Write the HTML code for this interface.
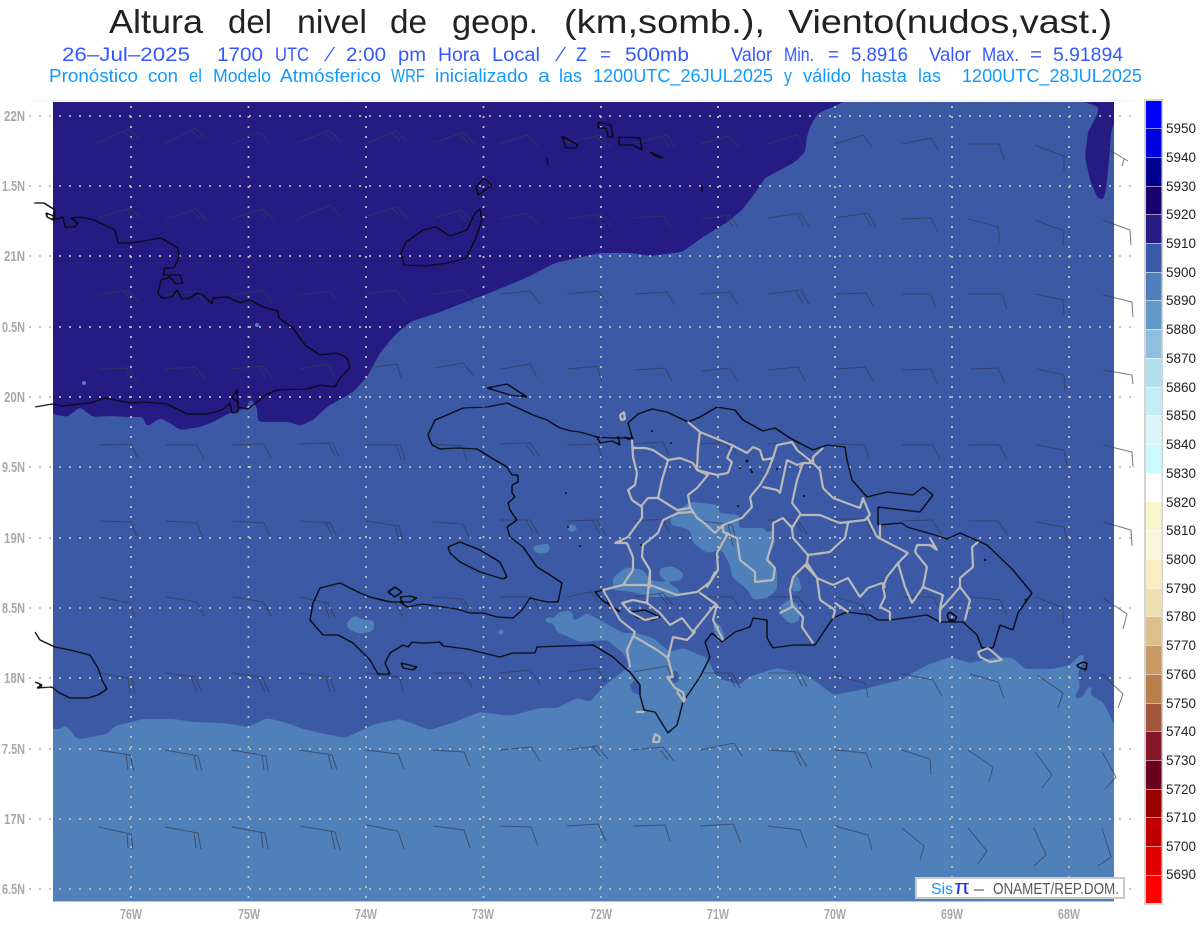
<!DOCTYPE html>
<html lang="es">
<head>
<meta charset="utf-8">
<title>Altura del nivel de geop.</title>
<style>
html,body{margin:0;padding:0;background:#fff}
svg{display:block;font-family:"Liberation Sans",sans-serif}
</style>
</head>
<body>
<svg width="1200" height="927" viewBox="0 0 1200 927" xmlns="http://www.w3.org/2000/svg">
<defs>
<clipPath id="plot"><rect x="53" y="102" width="1061" height="799"/></clipPath>
<filter id="s" x="-5%" y="-5%" width="110%" height="110%" color-interpolation-filters="sRGB">
<feGaussianBlur stdDeviation="2"/>
<feComponentTransfer><feFuncA type="linear" slope="12" intercept="-5.5"/></feComponentTransfer>
</filter>
<filter id="l" x="-2%" y="-2%" width="104%" height="104%" color-interpolation-filters="sRGB">
<feGaussianBlur stdDeviation="0.8"/>
<feComponentTransfer><feFuncA type="linear" slope="4" intercept="-1"/></feComponentTransfer>
</filter>
</defs>
<rect width="1200" height="927" fill="#fff"/>

<!-- Titles -->
<g font-size="33.5" fill="#222">
<text x="109" y="33" textLength="94" lengthAdjust="spacingAndGlyphs">Altura</text>
<text x="228" y="33" textLength="44" lengthAdjust="spacingAndGlyphs">del</text>
<text x="297" y="33" textLength="70" lengthAdjust="spacingAndGlyphs">nivel</text>
<text x="390" y="33" textLength="37" lengthAdjust="spacingAndGlyphs">de</text>
<text x="452" y="33" textLength="86" lengthAdjust="spacingAndGlyphs">geop.</text>
<text x="564" y="33" textLength="201" lengthAdjust="spacingAndGlyphs">(km,somb.),</text>
<text x="788" y="33" textLength="324" lengthAdjust="spacingAndGlyphs">Viento(nudos,vast.)</text>
</g>
<g font-size="19.500" fill="#3358ff">
<text x="62" y="61" textLength="128" lengthAdjust="spacingAndGlyphs">26–Jul–2025</text>
<text x="217" y="61" textLength="46" lengthAdjust="spacingAndGlyphs">1700</text>
<text x="275" y="61" textLength="34" lengthAdjust="spacingAndGlyphs">UTC</text>
<text transform="translate(324,61) skewX(-22)">/</text>
<text x="346" y="61" textLength="40" lengthAdjust="spacingAndGlyphs">2:00</text>
<text x="398" y="61" textLength="28" lengthAdjust="spacingAndGlyphs">pm</text>
<text x="438" y="61" textLength="42" lengthAdjust="spacingAndGlyphs">Hora</text>
<text x="492" y="61" textLength="48" lengthAdjust="spacingAndGlyphs">Local</text>
<text transform="translate(555,61) skewX(-22)">/</text>
<text x="576" y="61" textLength="11" lengthAdjust="spacingAndGlyphs">Z</text>
<text x="600" y="61" textLength="11" lengthAdjust="spacingAndGlyphs">=</text>
<text x="625" y="61" textLength="64" lengthAdjust="spacingAndGlyphs">500mb</text>
<text x="731" y="61" textLength="41" lengthAdjust="spacingAndGlyphs">Valor</text>
<text x="784" y="61" textLength="30" lengthAdjust="spacingAndGlyphs">Min.</text>
<text x="828" y="61" textLength="11" lengthAdjust="spacingAndGlyphs">=</text>
<text x="851" y="61" textLength="57" lengthAdjust="spacingAndGlyphs">5.8916</text>
<text x="929" y="61" textLength="42" lengthAdjust="spacingAndGlyphs">Valor</text>
<text x="982" y="61" textLength="37" lengthAdjust="spacingAndGlyphs">Max.</text>
<text x="1030" y="61" textLength="12" lengthAdjust="spacingAndGlyphs">=</text>
<text x="1053" y="61" textLength="70" lengthAdjust="spacingAndGlyphs">5.91894</text>
</g>
<g font-size="18" fill="#0f9aff">
<text x="49" y="82" textLength="89" lengthAdjust="spacingAndGlyphs">Pronóstico</text>
<text x="148" y="82" textLength="30" lengthAdjust="spacingAndGlyphs">con</text>
<text x="189" y="82" textLength="13" lengthAdjust="spacingAndGlyphs">el</text>
<text x="213" y="82" textLength="58" lengthAdjust="spacingAndGlyphs">Modelo</text>
<text x="280" y="82" textLength="101" lengthAdjust="spacingAndGlyphs">Atmósferico</text>
<text x="391" y="82" textLength="34" lengthAdjust="spacingAndGlyphs">WRF</text>
<text x="435" y="82" textLength="93" lengthAdjust="spacingAndGlyphs">inicializado</text>
<text x="538" y="82" textLength="12" lengthAdjust="spacingAndGlyphs">a</text>
<text x="559" y="82" textLength="23" lengthAdjust="spacingAndGlyphs">las</text>
<text x="593" y="82" textLength="180" lengthAdjust="spacingAndGlyphs">1200UTC_26JUL2025</text>
<text x="784" y="82" textLength="8" lengthAdjust="spacingAndGlyphs">y</text>
<text x="803" y="82" textLength="48" lengthAdjust="spacingAndGlyphs">válido</text>
<text x="861" y="82" textLength="46" lengthAdjust="spacingAndGlyphs">hasta</text>
<text x="918" y="82" textLength="23" lengthAdjust="spacingAndGlyphs">las</text>
<text x="962" y="82" textLength="180" lengthAdjust="spacingAndGlyphs">1200UTC_28JUL2025</text>
</g>

<!-- Plot background -->
<path d="M32 100.5H1135" stroke="#f0f0f4" stroke-width="1"/>
<rect x="53" y="102" width="1061" height="799" fill="#3c59a5"/>
<rect x="53" y="901" width="1061" height="1" fill="#a9c8e8"/>

<g clip-path="url(#plot)">
<!-- Light field -->
<g fill="#4f80ba" filter="url(#s)">
<path d="M40 728 53 728 58 730 66 725 77 739 87 738 107 734 115 726 143 719 173 719 193 722 223 723 248 727 267 718 287 723 300 728 320 733 345 738 375 724 400 719 430 730 455 722 480 712 510 716 540 708 557 708 577 698 590 702 603 687 622 672 630 665 623 653 607 640 580 642 557 632 553 622 557 613 572 610 573 622 587 613 600 620 623 633 637 633 653 638 670 652 683 648 707 658 717 678 740 685 748 677 777 668 800 673 817 682 833 695 860 690 900 680 927 665 950 657 970 663 997 657 1013 658 1025 669 1053 669 1070 665 1082 653 1085 658 1078 673 1080 687 1073 700 1083 697 1088 687 1093 685 1090 695 1103 702 1112 720 1120 740V910H40Z"/>
<path d="M672 515 690 502 703 503 718 505 719 513 740 515 738 528 765 528 767 535 773 527 775 543 768 557 777 570 777 590 767 598 753 600 748 590 732 577 730 565 722 550 707 553 693 543 690 530 680 527 670 525Z"/>
<path d="M613 577 627 567 643 570 650 580 668 583 680 590 678 597 650 597 632 592 613 590Z"/>
<path d="M660 568 672 566 684 573 681 581 668 581 659 576Z"/>
<path d="M780 606 790 599 798 605 800 621 790 624 780 614Z"/>
<path d="M792 577 798 575 802 591 792 592Z"/>
<path d="M712 622 720 624 726 641 717 642Z"/>
<path d="M346 623 355 615 363 620 374 620 374 631 360 634 348 629Z"/>
<path d="M530 547 549 543 550 552 538 554Z"/>
<path d="M566 528 572 523 579 529 571 533Z"/>
<ellipse cx="549" cy="620" rx="4" ry="3.500"/><ellipse cx="501" cy="632" rx="4" ry="3"/>
<path d="M45 372 56 380 57 394 45 400Z"/>
<path d="M78 385 84 378 90 386 84 388Z"/>
</g>
<g fill="#3c59a5">
<path d="M630 685 635 680 640 685 640 695 633 693Z"/>
<ellipse cx="675" cy="677" rx="4" ry="6"/>
</g>

<!-- Dark field -->
<g fill="#261b83" filter="url(#s)">
<path d="M40 92H864L833 107 818 113 810 127 807 137 805 152 795 162 765 178 755 193 742 210 726 223 703 237 682 252 650 256 631 253 600 253 555 263 528 277 497 290 471 300 440 312 410 322 395 335 380 353 367 377 353 392 327 407 313 420 300 426 290 422 258 422 257 408 250 397 247 408 230 413 213 422 200 427 180 430 170 423 160 418 147 427 143 417 130 417 110 416 93 417 80 407 67 417 53 414 40 414Z"/>
<path d="M1084 92 1084 102 1099 107 1097 115 1088 132 1085 157 1090 180 1097 197 1103 201 1106 190 1109 160 1111 133 1114 122 1125 122V92Z"/>
</g>
<g fill="#4f80ba"><circle cx="257" cy="325" r="2"/><circle cx="84" cy="383" r="2"/></g>
</g>

<!-- Grid -->
<g fill="none" stroke="#c0c0b0" stroke-width="1.800" stroke-dasharray="2 8">
<path d="M29 116H1135M29 186H1135M29 256H1135M29 327H1135M29 397H1135M29 467H1135M29 538H1135M29 608H1135M29 678H1135M29 749H1135M29 819H1135M29 889H1135"/>
<path d="M131 106V905M248.5 106V905M366 106V905M483.5 106V905M601 106V905M718 106V905M835 106V905M952 106V905M1069 106V905"/>
</g>

<!-- Wind barbs -->
<path fill="none" stroke="#333a55" stroke-opacity=".7" stroke-width="1" d="
M98 143L128 129 140 139M124 131 132 139M165 143L195 128 207 139M191 130 199 138M232 144L259 132 270 143M298 143L329 130 341 142M325 132 333 141M365 144L396 131 407 142M392 133 400 141M434 143L464 132 474 144M460 134 468 143M500 144L527 135 538 147M566 143L600 135 611 148M596 136 605 146M634 143L667 135 675 148M662 137 669 147M701 144L729 136 739 148M768 144L797 135 805 148M835 144L863 135 872 147M902 144L931 138 939 151M968 144L999 144 1004 159M1035 145L1064 156 1064 171M1103 146L1128 161M1124 159 1122 166
M98 218L130 208 140 218M126 209 134 218M165 219L196 209 207 221M192 210 200 220M232 219L262 209 274 220M258 210 266 219M298 219L330 205 341 217M365 217L396 207 408 218M392 208 400 217M434 218L461 210 473 222M457 211 465 221M500 219L526 213 538 224M567 219L600 214 612 227M596 215 604 226M634 218L663 216 671 229M701 219L730 215 738 228M726 216 733 227M768 218L801 213 809 227M797 214 804 226M835 218L868 213 876 227M864 214 871 226M902 219L931 218 938 232M968 219L998 227 1000 242M1035 220L1064 231 1063 246M1103 220L1130 230 1131 245
M98 295L128 290 139 303M124 291 132 302M165 295L195 291 206 304M232 295L263 290 272 303M298 295L330 291 336 299M365 294L396 290 406 303M434 294L463 290 473 303M500 294L530 291 540 304M567 294L598 291 608 304M634 294L667 292 675 305M701 294L730 292 738 305M768 294L801 290 809 304M796 291 803 303M835 294L866 293 873 306M902 294L930 294 936 308M968 294L1002 294 1007 309M1036 294L1063 300 1064 315M1103 295L1132 302 1133 317
M98 369L130 368 137 383M126 368 132 382M165 369L195 367 205 379M191 368 199 378M232 369L263 366 273 379M259 367 266 378M300 369L328 364 336 378M367 368L397 364 401 378M434 368L463 363 473 375M501 369L530 364 537 377M568 369L597 366 602 382M635 370L665 368 672 381M702 371L730 368 738 381M768 370L798 367 805 381M835 369L865 367 873 381M902 370L931 369 937 383M970 369L998 368 1005 383M1037 369L1064 375 1065 390M1103 370L1132 375 1133 384
M99 445L131 444 138 458M166 445L197 445 204 459M233 445L264 444 271 458M299 444L333 443 339 457M329 444 335 456M366 445L400 445 405 460M396 445 401 459M433 444L462 446 467 461M500 444L530 443 540 457M526 444 534 456M567 445L597 444 602 458M633 444L663 442 669 455M701 444L730 442 737 455M726 443 732 454M768 444L797 442 803 458M835 444L865 445 869 459M902 445L933 445 940 459M969 445L999 445 1007 459M1036 445L1064 450 1067 465M1103 445L1132 452 1133 467
M99 521L131 522 137 537M166 521L197 523 203 538M233 521L264 523 270 537M299 521L330 523 337 537M326 523 332 535M366 521L399 526 403 542M395 525 399 541M433 522L463 524 470 539M500 520L530 520 539 535M526 520 533 532M567 521L597 520 606 536M592 520 600 534M634 521L663 519 669 533M702 521L732 525 738 547M728 524 733 546M768 520L798 520 807 534M794 520 802 532M834 519L865 519 873 533M903 521L932 520 941 534M969 521L998 521 1008 535M1036 522L1064 527 1067 542M1103 522L1131 530 1132 546
M99 597L130 603 135 618M166 597L197 602 204 616M233 597L263 602 271 616M299 597L328 603 335 618M324 602 329 617M366 597L395 602 403 617M433 597L463 599 472 612M459 598 467 611M500 597L532 597 540 610M567 597L595 591 605 603M591 592 599 603M633 597L663 593 673 605M659 594 668 605M702 597L732 597 739 606M768 597L798 597 807 608M835 597L863 605 869 620M903 597L933 597 939 607M970 597L1000 600 1007 615M1036 597L1063 608 1063 623M1103 598L1127 614 1123 629
M100 673L132 679 135 694M128 679 130 693M165 673L195 677 202 692M191 677 197 692M232 673L262 677 269 692M258 677 265 692M299 673L330 677 335 692M326 677 330 692M366 673L399 677 403 691M433 673L463 673 472 687M500 673L530 670 540 684M567 672L597 668 605 682M633 672L667 666 672 677M703 673L732 673 740 688M728 673 735 687M768 673L800 673 807 687M796 673 802 686M835 675L865 683 868 697M902 674L933 680 942 696M970 674L998 682 1004 698M1037 675L1063 693 1058 708M1102 674L1123 694 1118 708
M98 750L130 755 134 771M126 754 128 770M165 750L198 756 202 771M194 755 197 770M232 750L266 756 268 771M262 755 264 770M299 750L332 755 337 770M328 754 332 769M366 750L398 754 404 769M433 750L464 752 470 767M500 750L531 747 540 761M567 750L597 746 608 759M593 747 602 758M633 750L663 747 674 761M659 748 668 760M700 750L734 743 742 756M768 750L798 752 807 767M794 751 801 766M835 750L866 753 872 768M902 750L930 759 931 775M968 750L993 767 989 782M1035 752L1052 775 1042 788M1102 752L1116 777 1105 789
M98 827L131 834 133 849M127 833 128 848M165 827L198 833 201 849M194 832 196 848M232 827L265 833 268 849M261 832 263 848M300 826L335 832 340 850M331 831 335 849M366 825L398 831 404 849M433 826L464 830 470 848M500 826L531 827 538 846M567 826L598 824 606 841M633 826L665 825 670 841M700 826L733 824 741 843M768 826L800 830 807 848M835 826L868 835 872 850M902 828L924 846 920 860M968 828L987 851 978 864M1034 828L1046 855 1034 866M1102 828L1111 857 1098 866"/>

<!-- Coastlines -->
<g fill="none" stroke="#0a0a14" stroke-width="1.100" stroke-linejoin="round" stroke-linecap="round" filter="url(#l)">
<path d="M633 438 613 438 597 437 580 432 571 431 560 428 547 420 533 415 507 403 487 407 463 408 447 415 435 420 428 435 432 445 440 449 458 448 477 449 490 457 507 467 512 475 518 475 518 482 512 485 512 493 515 497 508 503 510 510 517 520 507 527 510 537 523 547 537 567 547 573 562 583 558 602 547 602 530 598 522 610 513 618 497 617 483 613 470 613 457 609 443 607 423 604 407 607 400 602 390 602 370 597 360 593 340 583 320 588 313 603 310 620 323 635 338 635 353 643 370 660 378 674 390 674 385 663 390 653 403 645 408 647 412 642 420 643 428 643 440 642 443 646 467 649 500 657 513 653 535 653 537 647 563 646 593 645 613 657 627 670 630 672 640 685 640 695 644 710 655 712 663 725 668 733 677 725 683 702 700 677 710 657 705 642 712 633 722 642 735 632 750 627 753 618 767 620 767 638 773 648 793 645 815 645 833 618 847 612 870 615 878 620 890 620 927 615 940 622 963 622 977 635 982 648 993 648 1000 625 1013 630 1018 613 1032 593 1013 570 987 545 960 533 947 539 935 535 907 527 902 523 878 525 878 507 920 512 933 495 923 487 913 495 887 492 867 497 852 480 847 460 845 447 827 445 813 450 790 438 775 428 763 431 743 420 735 410 717 407 700 417 688 422 667 412 652 409 638 414 628 423 633 440"/>
<path d="M448 547 460 542 480 550 500 562 507 577 503 579 480 572 460 562 450 553Z"/>
<path d="M487 388 507 384 527 397 510 395Z"/>
<path d="M388 592 395 587 402 592 395 597Z"/>
<path d="M400 597 410 596 417 598 410 602 402 602Z"/>
<path d="M401 663 417 667 413 670 403 668Z"/>
<path d="M947 615 950 612 957 617 955 620 949 620Z"/>
<path d="M978 652 988 648 1002 660 990 662 980 657Z"/>
<path d="M1077 665 1083 662 1087 663 1086 670 1078 667Z"/>
<path d="M597 437 600 443 612 441 620 445 618 436M625 437 630 440"/>
<path d="M603 590 610 605 620 612 602 600 595 592Z"/>
<path d="M630 612 645 610 660 617 652 620 638 618Z"/>
<path d="M34 203 44 203 55 210 54 220 63 217 65 227 75 227 78 223 71 218 80 217 94 220 115 230 118 243 132 243 161 238 178 248 179 257 174 268 165 268 163 275 180 275 183 283 176 284 170 277 161 280 158 293 162 298 172 297 177 290 182 299 190 298 197 293 203 295 212 304 213 298 227 297 240 303 250 300 263 307 278 311 279 318 293 328 305 345 320 355 337 353 347 358 350 368 340 378 335 387 320 385 307 389 277 390 265 395 257 402 248 409 238 407 237 389 232 398 238 402 238 412 232 413 230 403 222 410 207 414 187 414 167 404 143 402 130 403 105 398 90 403 63 406 52 404 35 407"/>
<path d="M46 213 54 216 53 220 47 217Z"/>
<path d="M480 209 482 220 475 240 466 258 448 263 425 266 404 265 401 253 406 242 423 230 436 227 450 236 467 230 475 213Z"/>
<path d="M484 178 492 185 478 195 476 187Z"/>
<path d="M562 136 578 145 576 148 566 148Z"/>
<path d="M547 158 548 165"/>
<path d="M598 122 611 125 613 137 608 137 606 128 598 128Z"/>
<path d="M619 137 640 138 642 150 633 145 619 145Z"/>
<path d="M650 152 663 158 657 157Z"/>
<path d="M702 185 702 192"/>
<path d="M35 632 40 640 55 647 70 650 90 655 98 668 102 680 107 689 98 695 88 698 70 698 58 692 52 687 37 688 42 685 35 682"/>
</g>
<g fill="#111">
<circle cx="652" cy="431" r="1"/><circle cx="671" cy="443" r="1"/><circle cx="747" cy="461" r="1.500"/><circle cx="740" cy="468" r="1"/><circle cx="751" cy="470" r="1"/><circle cx="752" cy="472" r="1.200"/><circle cx="777" cy="469" r="1"/><circle cx="804" cy="496" r="1"/><circle cx="738" cy="506" r="1"/><circle cx="641" cy="545" r="1"/><circle cx="985" cy="560" r="1.200"/><circle cx="1026" cy="600" r="1.500"/><circle cx="566" cy="493" r="1"/><circle cx="580" cy="546" r="1"/><circle cx="568" cy="527" r="1"/>
</g>

<!-- Provincial borders -->
<g fill="none" stroke="#b8b8b8" stroke-width="1.700" stroke-linejoin="round" stroke-linecap="round" filter="url(#l)">
<path d="M632 440 633 457 637 473 635 485 628 490 632 500 642 507 642 518 635 527 628 537 615 543 627 543 633 557 633 570 623 585 603 590 607 597 620 620 635 632 627 650 630 667"/>
<path d="M623 585 650 585 677 595 697 592 710 582 715 572"/>
<path d="M635 637 657 650 668 658 673 677 667 677 675 688 683 692 685 700"/>
<path d="M668 658 673 637 687 640 695 632"/>
<path d="M650 570 647 603 660 613 670 625 682 618 693 632 713 607 717 605 700 593"/>
<path d="M713 620 723 640M717 605 713 620"/>
<path d="M622 603 633 600 647 603M622 603 630 612 645 620 658 617"/>
<path d="M632 448 645 448 653 450 668 460 680 458 693 463 697 470 708 475 697 488 688 495 690 507 697 518 703 522 715 533 723 525 742 518 752 507 750 497 760 485 767 473 773 458 777 445 792 442"/>
<path d="M668 460 662 480 658 498 677 510 690 508"/>
<path d="M688 422 700 432 698 448 697 470"/>
<path d="M700 432 732 445 747 453 753 447 760 450 763 460 773 458"/>
<path d="M697 470 717 475 728 473 732 462 727 458 732 447"/>
<path d="M658 498 648 498 642 505"/>
<path d="M678 513 663 520 658 533 643 545 642 557 650 570 650 587"/>
<path d="M678 513 692 512"/>
<path d="M723 525 723 532 737 538 740 560 755 572 755 582 773 580 775 568 767 560 773 540 773 523 783 518 792 528 800 515 820 515 832 520 840 523 848 522 865 520 870 515 863 498"/>
<path d="M728 533 717 553 718 570 707 587"/>
<path d="M792 528 793 538 808 555 807 563 817 578"/>
<path d="M808 555 830 552 835 547 845 538 848 523"/>
<path d="M807 563 793 577 790 590 792 605 803 617 802 627 813 643"/>
<path d="M777 490 763 487M777 490 780 493 787 460 797 465 803 463 813 463 820 470 823 488 833 498 860 508 863 498"/>
<path d="M803 463 797 480 792 503 800 513"/>
<path d="M813 463 813 457 823 448"/>
<path d="M792 442 797 450 812 462"/>
<path d="M867 517 877 537 908 553 898 563 887 577 883 587 885 597 880 607 890 612 890 620"/>
<path d="M898 563 905 587 912 603 923 587 927 567 915 552 917 545 930 545 937 550 930 538"/>
<path d="M923 587 943 595 940 608 940 622"/>
<path d="M940 610 960 587 970 600 965 620"/>
<path d="M960 587 960 578 973 567 972 547 978 542"/>
<path d="M805 565 817 578 833 585 848 578 860 597 868 588 882 583 885 587"/>
<path d="M817 578 820 600 835 610 833 618"/>
<path d="M835 603 848 612"/>
<path d="M880 525 880 537"/>
<path d="M780 613 792 607"/>
<path d="M978 652 988 648 1002 660 990 662 980 657Z"/>
<path d="M653 742 655 734 660 737 659 742Z"/>
<path d="M636 712 644 712"/>
<path d="M620 415 624 412 625 419 621 420Z"/>
<path d="M677 692 684 702"/>
</g>

<!-- Axis labels -->
<g font-size="15" font-weight="bold" fill="#a8a8a8">
<text x="4" y="121" textLength="21" lengthAdjust="spacingAndGlyphs">22N</text>
<text x="2" y="191" textLength="23" lengthAdjust="spacingAndGlyphs">1.5N</text>
<text x="4" y="261" textLength="21" lengthAdjust="spacingAndGlyphs">21N</text>
<text x="2" y="332" textLength="23" lengthAdjust="spacingAndGlyphs">0.5N</text>
<text x="4" y="402" textLength="21" lengthAdjust="spacingAndGlyphs">20N</text>
<text x="2" y="472" textLength="23" lengthAdjust="spacingAndGlyphs">9.5N</text>
<text x="4" y="543" textLength="21" lengthAdjust="spacingAndGlyphs">19N</text>
<text x="2" y="613" textLength="23" lengthAdjust="spacingAndGlyphs">8.5N</text>
<text x="4" y="683" textLength="21" lengthAdjust="spacingAndGlyphs">18N</text>
<text x="2" y="754" textLength="23" lengthAdjust="spacingAndGlyphs">7.5N</text>
<text x="4" y="824" textLength="21" lengthAdjust="spacingAndGlyphs">17N</text>
<text x="2" y="894" textLength="23" lengthAdjust="spacingAndGlyphs">6.5N</text>
<text x="120" y="919" textLength="22" lengthAdjust="spacingAndGlyphs">76W</text>
<text x="238" y="919" textLength="22" lengthAdjust="spacingAndGlyphs">75W</text>
<text x="355" y="919" textLength="22" lengthAdjust="spacingAndGlyphs">74W</text>
<text x="472" y="919" textLength="22" lengthAdjust="spacingAndGlyphs">73W</text>
<text x="590" y="919" textLength="22" lengthAdjust="spacingAndGlyphs">72W</text>
<text x="707" y="919" textLength="22" lengthAdjust="spacingAndGlyphs">71W</text>
<text x="824" y="919" textLength="22" lengthAdjust="spacingAndGlyphs">70W</text>
<text x="941" y="919" textLength="22" lengthAdjust="spacingAndGlyphs">69W</text>
<text x="1058" y="919" textLength="22" lengthAdjust="spacingAndGlyphs">68W</text>
</g>

<!-- Legend box -->
<rect x="916" y="878" width="208" height="20" fill="#fff" stroke="#c9c9c9" stroke-width="2"/>
<text x="931" y="894" font-size="15.500" fill="#1295ff" textLength="22" lengthAdjust="spacingAndGlyphs">Sis</text>
<text x="954" y="894" font-size="20" fill="#2233ee" textLength="16" lengthAdjust="spacingAndGlyphs">π</text>
<text x="974" y="894" font-size="15" fill="#444" textLength="10" lengthAdjust="spacingAndGlyphs">–</text>
<text x="993" y="894" font-size="15.500" fill="#555" textLength="126" lengthAdjust="spacingAndGlyphs">ONAMET/REP.DOM.</text>

<!-- Colour bar -->
<rect x="1144" y="99" width="19" height="806" fill="#d3d3d3"/>
<g>
<rect x="1146" y="101" width="15.500" height="27" fill="#0000ff"/>
<rect x="1146" y="128" width="15.500" height="29" fill="#0000de"/>
<rect x="1146" y="157" width="15.500" height="29" fill="#00008f"/>
<rect x="1146" y="186" width="15.500" height="28" fill="#1a006e"/>
<rect x="1146" y="214" width="15.500" height="29" fill="#261b83"/>
<rect x="1146" y="243" width="15.500" height="29" fill="#3c59a5"/>
<rect x="1146" y="272" width="15.500" height="28" fill="#4f80ba"/>
<rect x="1146" y="300" width="15.500" height="29" fill="#6399c9"/>
<rect x="1146" y="329" width="15.500" height="29" fill="#8fbfdf"/>
<rect x="1146" y="358" width="15.500" height="29" fill="#b3dfee"/>
<rect x="1146" y="387" width="15.500" height="28" fill="#c4ecf5"/>
<rect x="1146" y="415" width="15.500" height="29" fill="#dcf4fa"/>
<rect x="1146" y="444" width="15.500" height="29" fill="#ccf9fd"/>
<rect x="1146" y="473" width="15.500" height="29" fill="#ffffff"/>
<rect x="1146" y="502" width="15.500" height="28" fill="#f9f4cc"/>
<rect x="1146" y="530" width="15.500" height="29" fill="#faf5dc"/>
<rect x="1146" y="559" width="15.500" height="29" fill="#f7eec2"/>
<rect x="1146" y="588" width="15.500" height="28" fill="#efe0b4"/>
<rect x="1146" y="616" width="15.500" height="29" fill="#dcc08c"/>
<rect x="1146" y="645" width="15.500" height="29" fill="#c69a62"/>
<rect x="1146" y="674" width="15.500" height="29" fill="#b87f4c"/>
<rect x="1146" y="703" width="15.500" height="28" fill="#a0573c"/>
<rect x="1146" y="731" width="15.500" height="29" fill="#851828"/>
<rect x="1146" y="760" width="15.500" height="29" fill="#6a001c"/>
<rect x="1146" y="789" width="15.500" height="28" fill="#960000"/>
<rect x="1146" y="817" width="15.500" height="29" fill="#c00000"/>
<rect x="1146" y="846" width="15.500" height="29" fill="#e00000"/>
<rect x="1146" y="875" width="15.500" height="28" fill="#ff0000"/>
</g>
<path stroke="#fff" stroke-opacity=".55" stroke-width="1" d="M1146 128.500h16M1146 157.500h16M1146 186.500h16M1146 214.500h16M1146 243.500h16M1146 272.500h16M1146 300.500h16M1146 329.500h16M1146 358.500h16M1146 387.500h16M1146 415.500h16M1146 444.500h16M1146 530.500h16M1146 559.500h16M1146 588.500h16M1146 616.500h16M1146 645.500h16M1146 674.500h16M1146 703.500h16M1146 731.500h16M1146 760.500h16M1146 789.500h16M1146 817.500h16M1146 846.500h16M1146 875.500h16"/>
<g font-size="14" fill="#222">
<text x="1166" y="133" textLength="30" lengthAdjust="spacingAndGlyphs">5950</text>
<text x="1166" y="162" textLength="30" lengthAdjust="spacingAndGlyphs">5940</text>
<text x="1166" y="191" textLength="30" lengthAdjust="spacingAndGlyphs">5930</text>
<text x="1166" y="219" textLength="30" lengthAdjust="spacingAndGlyphs">5920</text>
<text x="1166" y="248" textLength="30" lengthAdjust="spacingAndGlyphs">5910</text>
<text x="1166" y="277" textLength="30" lengthAdjust="spacingAndGlyphs">5900</text>
<text x="1166" y="305" textLength="30" lengthAdjust="spacingAndGlyphs">5890</text>
<text x="1166" y="334" textLength="30" lengthAdjust="spacingAndGlyphs">5880</text>
<text x="1166" y="363" textLength="30" lengthAdjust="spacingAndGlyphs">5870</text>
<text x="1166" y="392" textLength="30" lengthAdjust="spacingAndGlyphs">5860</text>
<text x="1166" y="420" textLength="30" lengthAdjust="spacingAndGlyphs">5850</text>
<text x="1166" y="449" textLength="30" lengthAdjust="spacingAndGlyphs">5840</text>
<text x="1166" y="478" textLength="30" lengthAdjust="spacingAndGlyphs">5830</text>
<text x="1166" y="507" textLength="30" lengthAdjust="spacingAndGlyphs">5820</text>
<text x="1166" y="535" textLength="30" lengthAdjust="spacingAndGlyphs">5810</text>
<text x="1166" y="564" textLength="30" lengthAdjust="spacingAndGlyphs">5800</text>
<text x="1166" y="593" textLength="30" lengthAdjust="spacingAndGlyphs">5790</text>
<text x="1166" y="621" textLength="30" lengthAdjust="spacingAndGlyphs">5780</text>
<text x="1166" y="650" textLength="30" lengthAdjust="spacingAndGlyphs">5770</text>
<text x="1166" y="679" textLength="30" lengthAdjust="spacingAndGlyphs">5760</text>
<text x="1166" y="708" textLength="30" lengthAdjust="spacingAndGlyphs">5750</text>
<text x="1166" y="736" textLength="30" lengthAdjust="spacingAndGlyphs">5740</text>
<text x="1166" y="765" textLength="30" lengthAdjust="spacingAndGlyphs">5730</text>
<text x="1166" y="794" textLength="30" lengthAdjust="spacingAndGlyphs">5720</text>
<text x="1166" y="822" textLength="30" lengthAdjust="spacingAndGlyphs">5710</text>
<text x="1166" y="851" textLength="30" lengthAdjust="spacingAndGlyphs">5700</text>
<text x="1166" y="879" textLength="30" lengthAdjust="spacingAndGlyphs">5690</text>
</g>
</svg>
</body>
</html>
